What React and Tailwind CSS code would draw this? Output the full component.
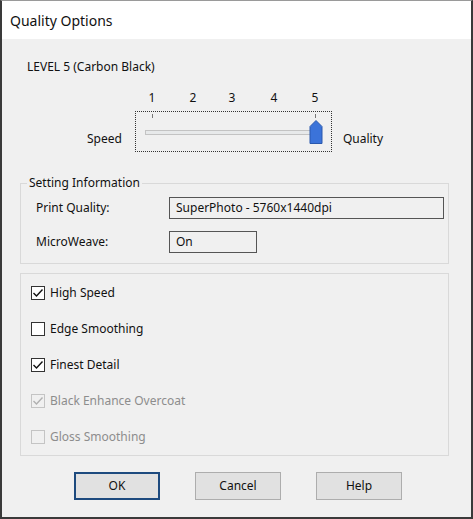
import React from "react";

const font = { fontFamily: '"Noto Sans", "Open Sans", Arial, sans-serif' };

function Check({ checked, disabled, label }) {
  return (
    <div className="flex items-center h-[36px]">
      <div
        className={
          "w-[14px] h-[14px] border flex items-center justify-center " +
          (disabled ? "border-[#c4c4c4] bg-[#f0f0f0]" : "border-[#333333] bg-white")
        }
      >
        {checked && (
          <svg width="12" height="12" viewBox="0 0 12 12">
            <polyline
              points="1.5,6 4.5,9 10.5,2.5"
              fill="none"
              stroke={disabled ? "#b0b0b0" : "#111"}
              strokeWidth="1.4"
            />
          </svg>
        )}
      </div>
      <span className={"ml-[5px] text-[12px] " + (disabled ? "text-[#8d8d8d]" : "text-[#111]")}>
        {label}
      </span>
    </div>
  );
}

function Button({ children, primary }) {
  return (
    <div
      className={
        "w-[86px] h-[28px] flex items-center justify-center text-[12px] text-[#111] bg-[#e1e1e1] " +
        (primary ? "border-2 border-[#1d4a7e]" : "border border-[#adadad]")
      }
    >
      {children}
    </div>
  );
}

export default function App() {
  const nums = [
    { n: "1", x: 17 },
    { n: "2", x: 58 },
    { n: "3", x: 97 },
    { n: "4", x: 139 },
    { n: "5", x: 180 },
  ];

  return (
    <div style={font} className="w-[473px] h-[519px] flex flex-col border-x-2 border-b-2 border-t border-x-[#3a3a3a] border-b-[#3a3a3a] border-t-[#9a9a9a] bg-[#f0f0f0]">
      <div className="h-[38px] bg-white flex items-center pl-[8px] text-[14px] text-[#111]">
        Quality Options
      </div>

      <div className="flex-1 flex flex-col">
        <div className="mt-[20px] pl-[25px] text-[12px] leading-[16px] text-[#111]">
          LEVEL 5 (Carbon Black)
        </div>

        <div className="mt-[15px] flex items-end pl-[85px]">
          <span className="text-[12px] leading-[16px] mb-[5px] mr-[13px] text-[#111]">Speed</span>
          <div className="flex flex-col">
            <div className="relative h-[16px] mb-[5px] text-[12px] leading-[16px] text-[#111]">
              {nums.map((d) => (
                <span key={d.n} className="absolute -translate-x-1/2" style={{ left: d.x }}>
                  {d.n}
                </span>
              ))}
            </div>
            <div className="relative w-[197px] h-[41px] border border-dotted border-[#333]">
              <div className="absolute left-[16px] top-[2px] w-px h-[4px] bg-[#777]" />
              <div className="absolute left-[179px] top-[2px] w-px h-[4px] bg-[#777]" />
              <div className="absolute left-[9px] top-[18px] w-[170px] h-[5px] bg-[#e7e9ea] border border-[#c3c3c3]" />
              <svg className="absolute left-[173px] top-[8px]" width="14" height="24" viewBox="0 0 14 24">
                <path d="M7 0.5 L13 6.5 V23.5 H1 V6.5 Z" fill="#3b73d9" stroke="#2a58ad" strokeWidth="1" />
              </svg>
            </div>
          </div>
          <span className="text-[12px] leading-[16px] mb-[5px] ml-[11px] text-[#111]">Quality</span>
        </div>

        <fieldset className="mt-[23px] ml-[18px] mr-[22px] border border-[#d9d9d9] pl-[6px] pr-[4px] pt-[6px] pb-[10px]">
          <legend className="px-[2px] text-[12px] leading-[16px] text-[#111]">Setting Information</legend>
          <div className="flex flex-col gap-[12px] pl-[9px]">
            <div className="flex items-center h-[22px]">
              <span className="w-[133px] text-[12px] text-[#111]">Print Quality:</span>
              <div className="w-[275px] h-[22px] border border-[#555] flex items-center pl-[6px] text-[12px] text-[#111]">
                SuperPhoto - 5760x1440dpi
              </div>
            </div>
            <div className="flex items-center h-[22px]">
              <span className="w-[133px] text-[12px] text-[#111]">MicroWeave:</span>
              <div className="w-[88px] h-[22px] border border-[#555] flex items-center pl-[6px] text-[12px] text-[#111]">
                On
              </div>
            </div>
          </div>
        </fieldset>

        <div className="mt-[9px] ml-[18px] mr-[22px] border border-[#d9d9d9] pl-[10px] pt-[1px]">
          <Check checked label="High Speed" />
          <Check label="Edge Smoothing" />
          <Check checked label="Finest Detail" />
          <Check checked disabled label="Black Enhance Overcoat" />
          <Check disabled label="Gloss Smoothing" />
        </div>

        <div className="mt-[16px] pl-[72px] flex gap-[35px]">
          <Button primary>OK</Button>
          <Button>Cancel</Button>
          <Button>Help</Button>
        </div>
      </div>
    </div>
  );
}
